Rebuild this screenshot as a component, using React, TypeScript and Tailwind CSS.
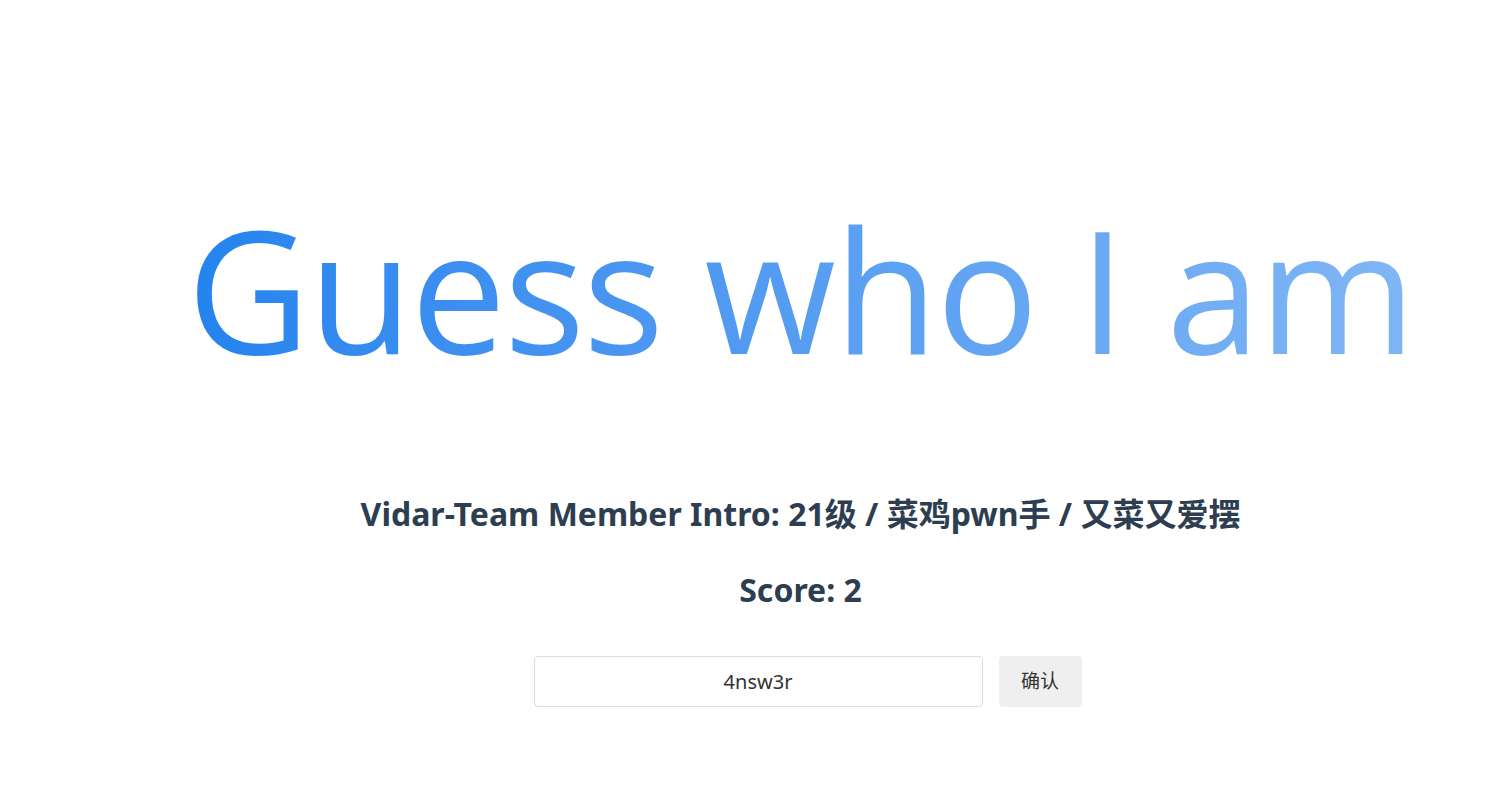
import { useState } from 'react';

export default function App() {
  const [answer, setAnswer] = useState('4nsw3r');

  return (
    <div className="min-h-screen bg-white text-[#2c3e50] font-['Noto_Sans','Noto_Sans_CJK_SC',sans-serif]">
      <div className="flex flex-col items-center pl-[90px] pt-[168px]">
        {/* Title */}
        <h1 className="inline-block bg-gradient-to-r from-[#2383ee] to-[#80b6f4] bg-clip-text text-transparent font-['Open_Sans',sans-serif] text-[170px] font-normal tracking-[-2px] leading-[240px]">
          Guess who I am
        </h1>

        {/* Intro */}
        <h2 className="mt-[86px] text-[32px] font-bold leading-[40px]">
          Vidar-Team Member Intro: 21级 / 菜鸡pwn手 / 又菜又爱摆
        </h2>
        <h2 className="mt-[36px] text-[32px] font-bold leading-[40px]">Score: 2</h2>

        {/* Answer form */}
        <div className="mt-[46px] flex items-center gap-4 pl-[14px]">
          <input
            value={answer}
            onChange={(e) => setAnswer(e.target.value)}
            className="w-[449px] h-[51px] rounded border border-[#dcdcdc] text-center text-[20px] text-[#333] outline-none"
          />
          <button className="w-[83px] h-[51px] rounded bg-[#efefef] text-[19px] text-[#333]">
            确认
          </button>
        </div>
      </div>
    </div>
  );
}
